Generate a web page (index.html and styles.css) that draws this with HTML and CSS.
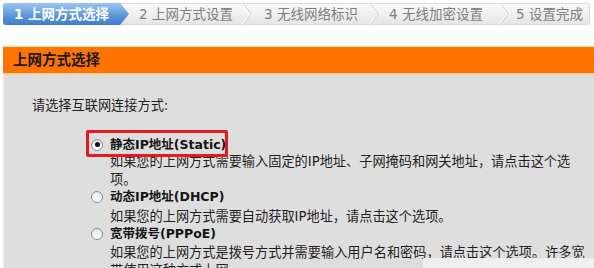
FILE: index.html
```html
<!DOCTYPE html>
<html lang="zh-CN">
<head>
    <meta charset="utf-8">
    <title>上网方式选择</title>
    <link rel="stylesheet" href="styles.css">
</head>
<body>

<div class="steps">
    <div class="step active">1 上网方式选择</div>
    <div class="step s2">2 上网方式设置</div>
    <svg class="sep" width="10" height="22" viewBox="0 0 10 22"><polyline points="1,0 9,11 1,22" fill="none" stroke="#c9c9c9" stroke-width="1"/><polyline points="0,0 8,11 0,22" fill="none" stroke="#ffffff" stroke-width="1"/></svg>
    <div class="step s3">3 无线网络标识</div>
    <svg class="sep" width="10" height="22" viewBox="0 0 10 22"><polyline points="1,0 9,11 1,22" fill="none" stroke="#c9c9c9" stroke-width="1"/><polyline points="0,0 8,11 0,22" fill="none" stroke="#ffffff" stroke-width="1"/></svg>
    <div class="step s4">4 无线加密设置</div>
    <svg class="sep" width="10" height="22" viewBox="0 0 10 22"><polyline points="1,0 9,11 1,22" fill="none" stroke="#c9c9c9" stroke-width="1"/><polyline points="0,0 8,11 0,22" fill="none" stroke="#ffffff" stroke-width="1"/></svg>
    <div class="step s5">5 设置完成</div>
</div>

<div class="panel">
    <div class="panel-head">上网方式选择</div>
    <div class="panel-body">
        <p class="prompt">请选择互联网连接方式:</p>

        <div class="option">
            <div class="opt-head marked"><span class="radio checked"></span><span class="opt-label">静态IP地址(Static)</span></div>
            <p class="opt-desc">如果您的上网方式需要输入固定的IP地址、子网掩码和网关地址，请点击这个选项。</p>
        </div>
        <div class="option">
            <div class="opt-head"><span class="radio"></span><span class="opt-label">动态IP地址(DHCP)</span></div>
            <p class="opt-desc">如果您的上网方式需要自动获取IP地址，请点击这个选项。</p>
        </div>
        <div class="option">
            <div class="opt-head"><span class="radio"></span><span class="opt-label">宽带拨号(PPPoE)</span></div>
            <p class="opt-desc">如果您的上网方式是拨号方式并需要输入用户名和密码，请点击这个选项。许多宽带使用这种方式上网。</p>
        </div>

        <div class="cover"></div>
    </div>
</div>

</body>
</html>
```

FILE: styles.css
```css
body {
    margin: 0;
    background-color: #ffffff;
    font-family: 'DejaVu Sans', 'Noto Sans CJK SC', sans-serif;
    color: #1e1e1e;
    overflow: hidden;
}
.steps {
    display: flex;
    height: 22px;
    margin: 3px 4px 0 3px;
    background: linear-gradient(#fbfbfb, #e4e4e4);
    box-shadow: inset 0 0 0 1px #d9d9d9;
    border-radius: 3px;
}
.step {
    font-size: 13.5px;
    line-height: 22px;
    color: #7e7e7e;
    white-space: nowrap;
}
.sep {
    flex: none;
    display: block;
}
.active {
    width: 115px;
    padding-left: 11px;
    color: #ffffff;
    font-weight: bold;
    background: linear-gradient(#9cc6f0, #5a95da 60%, #3f7ccc);
    border-radius: 3px 0 0 3px;
    clip-path: polygon(0 0, calc(100% - 9px) 0, 100% 50%, calc(100% - 9px) 100%, 0 100%);
}
.s2 {
    width: 103px;
    padding-left: 10px;
}
.s3 {
    width: 105px;
    padding-left: 12px;
}
.s4 {
    width: 110px;
    padding-left: 10px;
}
.s5 {
    flex: 1;
    padding-left: 7px;
}
.panel {
    margin: 21px 0 0 3px;
    border-top: 1px solid #f9dcbd;
}
.panel-head {
    height: 26px;
    line-height: 26px;
    padding-left: 10px;
    background-color: #ff7300;
    border-bottom: 2px solid #f4cfa8;
    font-size: 14.5px;
    font-weight: bold;
    color: #1a1a1a;
}
.panel-body {
    position: relative;
    height: 200px;
    padding: 22px 0 0 0;
    background-color: #dedede;
    border-left: 1px solid #efefef;
    font-size: 13.2px;
    line-height: 17.5px;
}
.prompt {
    margin: 0 0 19.5px 28px;
}
.option {
    margin-left: 87px;
}
.opt-head {
    position: relative;
    display: inline-flex;
    align-items: center;
    height: 17.5px;
}
.marked::before {
    content: '';
    position: absolute;
    left: -5px;
    right: -2px;
    top: -6px;
    bottom: -4px;
    border: 3px solid #e31b1f;
    border-radius: 2px;
}
.radio {
    width: 10px;
    height: 10px;
    margin-right: 7px;
    border: 1px solid #8c8c8c;
    border-radius: 50%;
    background: linear-gradient(#e6e6e6, #ffffff);
    display: flex;
    align-items: center;
    justify-content: center;
}
.radio.checked::after {
    content: '';
    width: 5px;
    height: 5px;
    border-radius: 50%;
    background-color: #111111;
}
.opt-label {
    font-size: 12.5px;
    font-weight: bold;
    color: #151515;
}
.opt-desc {
    width: 478px;
    margin: 0 0 0 19px;
}
.cover {
    position: absolute;
    left: 419px;
    top: 183px;
    right: 0;
    bottom: 0;
    background-color: #efefef;
}
```
